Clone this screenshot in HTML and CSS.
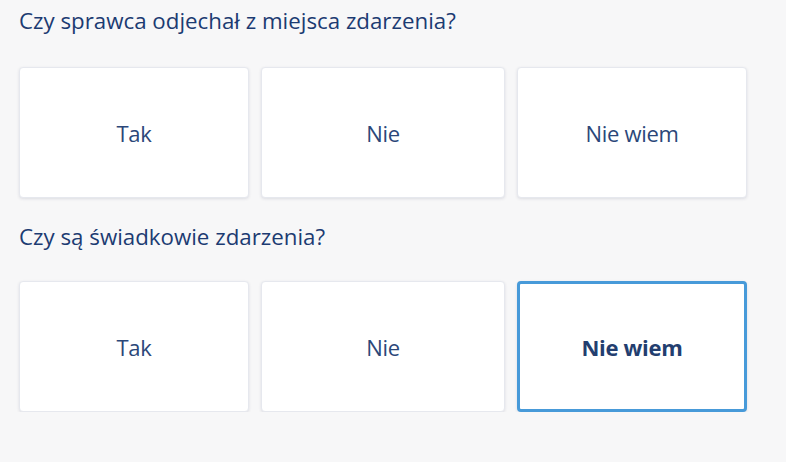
FILE: index.html
```html
<!DOCTYPE html>
<html lang="pl">
<head>
<meta charset="utf-8">
<link rel="stylesheet" href="styles.css">
</head>
<body>
<main class="form">
  <section class="question">
    <h2 class="question-title">Czy sprawca odjechał z miejsca zdarzenia?</h2>
    <div class="options">
      <button class="option">Tak</button>
      <button class="option">Nie</button>
      <button class="option">Nie wiem</button>
    </div>
  </section>
  <section class="question question-second">
    <h2 class="question-title">Czy są świadkowie zdarzenia?</h2>
    <div class="options">
      <button class="option">Tak</button>
      <button class="option">Nie</button>
      <button class="option option-selected">Nie wiem</button>
    </div>
  </section>
</main>
</body>
</html>
```

FILE: styles.css
```css
html, body {
  margin: 0;
  background: #f7f7f8;
}
body {
  font-family: "Open Sans", "DejaVu Sans", sans-serif;
  color: #1c3b72;
}
.form {
  width: 728px;
  padding: 6px 0 0 19px;
}
.question-title {
  margin: 0 0 31px 0;
  font-size: 22.3px;
  line-height: 30px;
  font-weight: 400;
  color: #1c3b72;
}
.question-second {
  margin-top: 24px;
}
.question-second .question-title {
  margin-bottom: 29px;
}
.options {
  display: grid;
  grid-template-columns: 230px 1fr 230px;
  column-gap: 12px;
}
.option {
  height: 131px;
  box-sizing: border-box;
  display: flex;
  align-items: center;
  justify-content: center;
  background: #fff;
  border: 1px solid #e6e8ee;
  border-radius: 4px;
  box-shadow: 0 1px 3px rgba(30, 40, 70, 0.12);
  font-family: "Open Sans", "DejaVu Sans", sans-serif;
  font-size: 22px;
  line-height: 30px;
  color: #2b4779;
  padding: 0;
  letter-spacing: -0.3px;
}
.option-selected {
  border: 3px solid #479ad9;
  font-weight: 700;
  color: #233e6f;
}
```
